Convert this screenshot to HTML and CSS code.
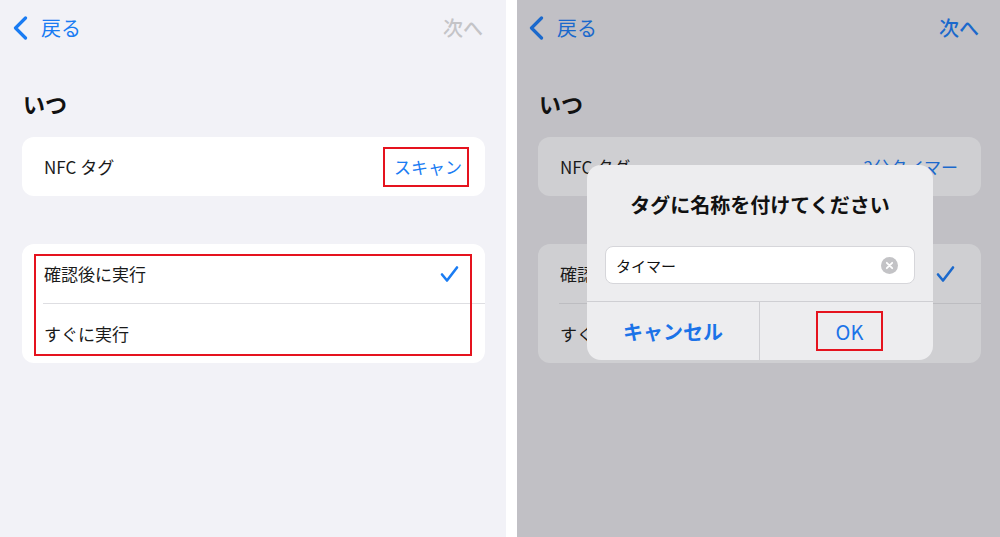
FILE: index.html
```html
<!DOCTYPE html>
<html lang="ja">
<head>
<meta charset="utf-8">
<link rel="stylesheet" href="styles.css">
</head>
<body>
<div class="screen">
  <section class="panel panel-light">
    <header class="nav">
      <span class="back">
        <svg class="chev" width="17" height="24" viewBox="0 0 17 24"><path d="M13.5 2 L3.5 12 L13.5 22" fill="none" stroke="currentColor" stroke-width="3.2" stroke-linecap="round" stroke-linejoin="round"/></svg>
        <span>戻る</span>
      </span>
      <span class="next next-off">次へ</span>
    </header>
    <h1 class="title">いつ</h1>
    <div class="card">
      <div class="row">
        <span class="label">NFC<span class="gap"></span>タグ</span>
        <span class="value mark">スキャン</span>
      </div>
    </div>
    <div class="card card-choices">
      <div class="row">
        <span class="label">確認後に実行</span>
        <svg class="check" width="19" height="18" viewBox="0 0 19 18"><path d="M2 9.5 L7 15.5 L17 2.5" fill="none" stroke="currentColor" stroke-width="2.6" stroke-linecap="round" stroke-linejoin="round"/></svg>
      </div>
      <div class="sep"></div>
      <div class="row">
        <span class="label">すぐに実行</span>
      </div>
      <div class="annot"></div>
    </div>
  </section>

  <section class="panel panel-dim">
    <header class="nav">
      <span class="back">
        <svg class="chev" width="17" height="24" viewBox="0 0 17 24"><path d="M13.5 2 L3.5 12 L13.5 22" fill="none" stroke="currentColor" stroke-width="3.2" stroke-linecap="round" stroke-linejoin="round"/></svg>
        <span>戻る</span>
      </span>
      <span class="next">次へ</span>
    </header>
    <h1 class="title">いつ</h1>
    <div class="card">
      <div class="row">
        <span class="label">NFC<span class="gap"></span>タグ</span>
        <span class="value">2分タイマー</span>
      </div>
    </div>
    <div class="card card-choices">
      <div class="row">
        <span class="label">確認後に実行</span>
        <svg class="check" width="19" height="18" viewBox="0 0 19 18"><path d="M2 9.5 L7 15.5 L17 2.5" fill="none" stroke="currentColor" stroke-width="2.6" stroke-linecap="round" stroke-linejoin="round"/></svg>
      </div>
      <div class="sep"></div>
      <div class="row">
        <span class="label">すぐに実行</span>
      </div>
    </div>

    <div class="alert">
      <div class="alert-title">タグに名称を付けてください</div>
      <div class="field">
        <span class="field-text">タイマー</span>
        <svg class="clear" width="17" height="17" viewBox="0 0 17 17"><circle cx="8.5" cy="8.5" r="8.5" fill="#c3c3c6"/><path d="M5.8 5.8 L11.2 11.2 M11.2 5.8 L5.8 11.2" stroke="#fff" stroke-width="1.8" stroke-linecap="round"/></svg>
      </div>
      <div class="alert-actions">
        <div class="action action-cancel">キャンセル</div>
        <div class="action action-ok"><span class="ok-mark">OK</span></div>
      </div>
    </div>
  </section>
</div>
</body>
</html>
```

FILE: styles.css
```css
* { box-sizing: border-box; }
html, body {
  margin: 0;
  padding: 0;
  background: #ffffff;
}
body {
  width: 1000px;
  height: 537px;
  overflow: hidden;
  font-family: "Noto Sans CJK JP", "Noto Sans", sans-serif;
  color: #111;
}
.screen {
  display: flex;
  gap: 11px;
  height: 537px;
}
.panel {
  position: relative;
  height: 537px;
  padding: 0 21px 0 22px;
}
.panel-light {
  width: 506px;
  background: #f2f2f7;
  --blue: #1a7cf3;
  --card: #ffffff;
  --sep: #dedee2;
}
.panel-dim {
  flex: 1;
  background: #c1c0c5;
  padding: 0 19px 0 21px;
  --blue: #1b69cc;
  --card: #cfcfd2;
  --sep: #bdbdc1;
}
.nav {
  height: 56px;
  display: flex;
  align-items: center;
  justify-content: space-between;
  margin-left: -10px;
  margin-right: 2px;
}
.back {
  display: flex;
  align-items: center;
  gap: 12px;
  color: var(--blue);
  font-size: 20px;
  line-height: 24px;
}
.chev { display: block; }
.next {
  color: var(--blue);
  font-size: 20px;
  font-weight: 500;
  line-height: 24px;
}
.next-off { color: #c4c4c7; }
.title {
  margin: 32px 0 19px 1px;
  font-size: 22px;
  font-weight: 700;
  line-height: 30px;
  color: #111;
}
.card {
  position: relative;
  background: var(--card);
  border-radius: 12px;
}
.card + .card { margin-top: 48px; }
.row {
  height: 59px;
  display: flex;
  align-items: center;
  justify-content: space-between;
  padding: 0 23px 0 22px;
  font-size: 17px;
}
.label { color: #1a1a1a; }
.gap { display: inline-block; width: 4px; }
.value { color: var(--blue); }
.check { color: var(--blue); margin-right: 3px; display: block; }
.sep {
  height: 1px;
  margin-left: 21px;
  background: var(--sep);
}
.mark {
  position: relative;
  display: inline-block;
  line-height: 17px;
}
.mark::after {
  content: "";
  position: absolute;
  left: -11px;
  right: -7px;
  top: -11px;
  bottom: -12px;
  border: 2px solid #e5131e;
}
.annot {
  position: absolute;
  left: 12px;
  right: 13px;
  top: 10px;
  bottom: 7px;
  border: 2px solid #e5131e;
}
.alert {
  position: absolute;
  left: 70px;
  top: 165px;
  width: 346px;
  height: 195px;
  background: #ededef;
  border-radius: 14px;
  display: flex;
  flex-direction: column;
  padding-top: 26px;
}
.alert-title {
  text-align: center;
  font-size: 20px;
  font-weight: 700;
  line-height: 28px;
  color: #111;
}
.field {
  margin: 27px 18px 17px;
  height: 38px;
  background: #fff;
  border: 1px solid #d6d6da;
  border-radius: 8px;
  display: flex;
  align-items: center;
  justify-content: space-between;
  padding: 0 16px 0 10px;
}
.field-text { font-size: 15px; color: #111; }
.clear { display: block; }
.alert-actions {
  flex: 1;
  display: flex;
  border-top: 1px solid #cfcfd3;
}
.action {
  flex: 1;
  display: flex;
  align-items: center;
  justify-content: center;
  color: #1b73e8;
  font-size: 20px;
}
.action-cancel {
  font-weight: 700;
  border-right: 1px solid #cfcfd3;
  flex: 0 0 173px;
}
.ok-mark {
  display: flex;
  align-items: center;
  justify-content: center;
  width: 67px;
  height: 40px;
  margin-left: 6px;
  border: 2px solid #e5131e;
}
```
